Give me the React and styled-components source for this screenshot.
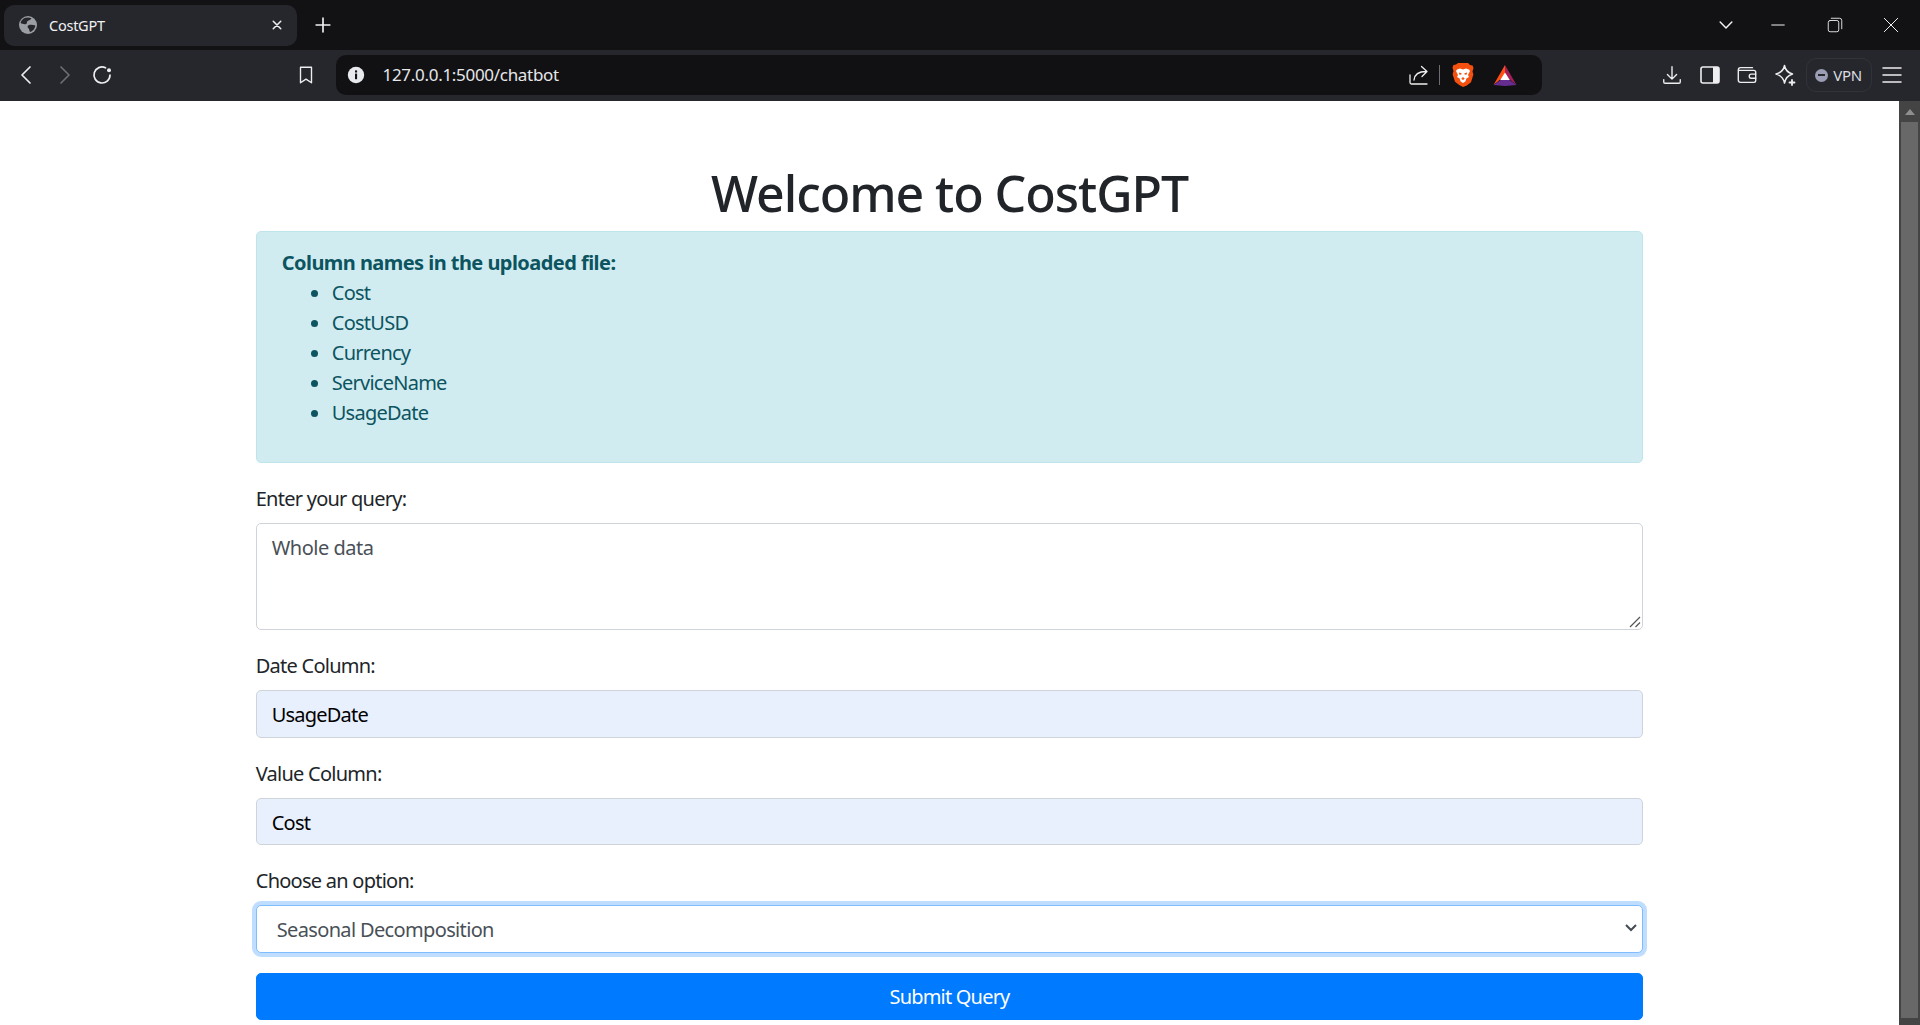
import React from "react";
import styled, { createGlobalStyle } from "styled-components";

const GlobalStyle = createGlobalStyle`
  html, body {
    margin: 0;
    height: 100%;
    overflow: hidden;
    background: #fff;
  }
  * { box-sizing: border-box; }
`;

const uiFont = `"Noto Sans", "Open Sans", Arial, sans-serif`;

const Shell = styled.div`
  display: flex;
  flex-direction: column;
  height: 100vh;
  font-family: ${uiFont};
`;

/* browser chrome */
const TabStrip = styled.div`
  flex: 0 0 50px;
  display: flex;
  align-items: center;
  background: #121214;
  color: #f1f1f3;
`;
const Tab = styled.div`
  flex: 0 0 293px;
  height: 41px;
  margin-left: 4px;
  padding: 0 11px 0 15px;
  display: flex;
  align-items: center;
  gap: 12px;
  background: #26272c;
  border-radius: 10px;
`;
const TabTitle = styled.span`
  flex: 1;
  font-size: 14.5px;
  letter-spacing: -0.25px;
`;
const Slot = styled.div`
  flex: 0 0 ${(p) => p.$w || 37.5}px;
  height: 36px;
  display: flex;
  align-items: center;
  justify-content: center;
`;
const Spacer = styled.div`
  flex: 1;
`;
const Toolbar = styled.div`
  flex: 0 0 51px;
  display: flex;
  align-items: center;
  padding: 0 8px 1px;
  background: #26272c;
  color: #eeeef0;
`;
const NavGroup = styled.div`
  flex: 0 0 279px;
  display: flex;
`;
const AddressBar = styled.div`
  flex: 0 0 1206px;
  height: 40px;
  margin-left: 11px;
  padding-left: 11px;
  display: flex;
  align-items: center;
  background: #111113;
  border-radius: 10px;
`;
const Url = styled.span`
  flex: 1;
  margin-left: 18px;
  padding-bottom: 2px;
  font-size: 17px;
  letter-spacing: -0.3px;
  color: #e6e7ea;
`;
const AddressEnd = styled.div`
  display: flex;
  align-items: center;
`;
const Divider = styled.div`
  width: 1px;
  height: 20px;
  margin: 0 12px 0 8px;
  background: #6d6e73;
`;
const ToolGroup = styled.div`
  margin-left: auto;
  display: flex;
  align-items: center;
`;
const VpnPill = styled.div`
  flex: 0 0 66px;
  height: 34px;
  margin-left: 2px;
  display: flex;
  align-items: center;
  justify-content: center;
  gap: 5px;
  border: 1px solid #323338;
  border-radius: 10px;
  font-size: 15px;
  letter-spacing: -0.4px;
  color: #dcdde1;
`;
const VpnDot = styled.span`
  position: relative;
  width: 13px;
  height: 13px;
  border-radius: 50%;
  background: #9a9db4;
  &::after {
    content: "";
    position: absolute;
    left: 3px;
    right: 3px;
    top: 5.5px;
    height: 2px;
    background: #26272c;
  }
`;

/* page */
const Body = styled.div`
  flex: 1;
  min-height: 0;
  display: flex;
`;
const Page = styled.main`
  flex: 1;
  min-width: 0;
  overflow: hidden;
  background: #fff;
  color: #212529;
`;
const Container = styled.div`
  width: 1387.5px;
  margin: 0 auto;
  padding-top: 62px;
  font-family: "Noto Sans", "Open Sans", Arial, sans-serif;
  font-size: 20px;
  line-height: 30px;
`;
const Title = styled.h1`
  margin: 0 0 7.5px;
  font-size: 50px;
  line-height: 60px;
  font-weight: 500;
  text-align: center;
  letter-spacing: -1.05px;
`;
const Alert = styled.div`
  padding: 15px 25px;
  margin-bottom: 20px;
  background: #d1ecf1;
  border: 1.25px solid #bee5eb;
  border-radius: 5px;
  color: #0c5460;
`;
const AlertHead = styled.strong`
  display: block;
  padding-top: 1px;
  margin-bottom: -1px;
  font-weight: 700;
  letter-spacing: -0.55px;
`;
const ColumnList = styled.ul`
  margin: 0 0 20px;
  padding-left: 50px;
  list-style: none;
`;
const ColumnItem = styled.li`
  position: relative;
  padding-top: 1px;
  margin-bottom: -1px;
  letter-spacing: -0.75px;
  &::before {
    content: "";
    position: absolute;
    left: -21px;
    top: 13px;
    width: 7px;
    height: 7px;
    border-radius: 50%;
    background: #0c5460;
  }
`;
const Field = styled.div`
  margin-bottom: 20px;
`;
const Label = styled.label`
  display: block;
  padding-top: 1px;
  margin-bottom: 9px;
  letter-spacing: -0.75px;
`;
const GripWrap = styled.div`
  position: relative;
`;
const TextArea = styled.textarea`
  display: block;
  width: 100%;
  height: 107.5px;
  padding: 9.5px 15px 6.5px;
  font: inherit;
  letter-spacing: -0.5px;
  color: #495057;
  background: #fff;
  border: 1.25px solid #ced4da;
  border-radius: 5px;
  outline: none;
  resize: none;
`;
const Grip = styled.svg`
  position: absolute;
  right: 2px;
  bottom: 2px;
  pointer-events: none;
`;
const TextInput = styled.input`
  display: block;
  width: 100%;
  height: 47.5px;
  padding: 8.5px 15px 6.5px;
  font: inherit;
  letter-spacing: -0.8px;
  color: #000;
  background: #e8f0fe;
  border: 1.25px solid #ced4da;
  border-radius: 5px;
  outline: none;
`;
const SelectWrap = styled.div`
  position: relative;
`;
const Select = styled.select`
  display: block;
  width: 100%;
  height: 47.5px;
  padding: 3px 30px 0 20px;
  font: inherit;
  letter-spacing: -0.65px;
  color: #495057;
  background: #fff;
  border: 1.25px solid #80bdff;
  border-radius: 5px;
  outline: none;
  appearance: none;
  box-shadow: 0 0 0 4px rgba(0, 123, 255, 0.25);
`;
const SelectArrow = styled.svg`
  position: absolute;
  right: 6px;
  top: 18px;
  pointer-events: none;
`;
const SubmitButton = styled.button`
  display: block;
  width: 100%;
  height: 47.5px;
  padding: 8.5px 15px 6.5px;
  font: inherit;
  letter-spacing: -0.8px;
  color: #fff;
  background: #007bff;
  border: 1.25px solid #007bff;
  border-radius: 5px;
`;

/* scrollbar */
const ScrollBar = styled.div`
  flex: 0 0 21px;
  display: flex;
  flex-direction: column;
  background: #444;
`;
const ScrollUp = styled.div`
  flex: 0 0 21px;
  display: flex;
  align-items: center;
  justify-content: center;
  &::before {
    content: "";
    border-left: 5.5px solid transparent;
    border-right: 5.5px solid transparent;
    border-bottom: 6px solid #8f8f8f;
  }
`;
const ScrollThumb = styled.div`
  flex: 1;
  margin: 0 2px 7px;
  background: #686868;
`;

const Line = ({ size = 20, sw = 1.5, children, box = 24 }) => (
  <svg width={size} height={size} viewBox={`0 0 ${box} ${box}`} fill="none" stroke="currentColor" strokeWidth={sw} strokeLinecap="round" strokeLinejoin="round">
    {children}
  </svg>
);

const Globe = () => (
  <svg width="18" height="18" viewBox="0 0 18 18">
    <circle cx="9" cy="9" r="9" fill="#9b9ea3" />
    <path d="M5 2.200C7 1.400 10 1.200 12.500 2.200 11.700 4 10 4.200 8.600 5 7.400 5.800 8.600 7.400 7 8 5.200 8.600 3 7.600 1.600 7 2 5 3.400 3.200 5 2.200Z" fill="#26272c" />
    <path d="M9.500 9.200C11.500 8.400 14.400 8.800 16.400 9.600 16 12.400 14.200 15 11.600 16 9.800 15.400 10.800 13.400 9.600 12.400 8.600 11.400 8 10 9.500 9.200Z" fill="#26272c" />
  </svg>
);

const InfoIcon = () => (
  <svg width="18" height="18" viewBox="0 0 18 18">
    <circle cx="9" cy="9" r="8.200" fill="#e8e9ec" />
    <rect x="8" y="7.600" width="2.100" height="5.600" fill="#111113" />
    <rect x="8" y="4.400" width="2.100" height="2.100" fill="#111113" />
  </svg>
);

const BraveIcon = () => (
  <svg width="22" height="26" viewBox="0 0 22 26">
    <path d="M6 1h10l2 2 2.600.4.900 2.600-1 3.600.900 3-2.400 7.600-4.200 3.200L11 25l-3.800-2-4.200-3.200L.6 12.200l.9-3L.5 5.600 1.400 3 4 2.600Z" fill="#f4500f" />
    <path d="M5 7.500 8 6.500l3 1 3-1 3 1 1 1.500-2 4 1 2-2.600 1.500-1 3-2.400 1.500-2.400-1.500-1-3L5 15l1-2-2-4Z" fill="#fff" />
    <path d="M7 10.500l2.600.8-.4 1.500-2-.4ZM15 10.500l-2.600.8.400 1.500 2-.4ZM11 15l-1.800 1.800L11 18l1.800-1.200Z" fill="#f4500f" />
  </svg>
);

const BatIcon = () => (
  <svg width="24" height="21" viewBox="0 0 24 21">
    <path d="M12 0 12 11 6.500 15 .500 20Z" fill="#ff4f12" />
    <path d="M12 0 12 11 17.500 15 23.500 20Z" fill="#a21f58" />
    <path d="M.500 20 7.500 15H16.500L23.500 20 12 21Z" fill="#662d91" />
    <path d="M12 7.500 16.800 15H7.200Z" fill="#fff" />
  </svg>
);

function BrowserChrome() {
  return (
    <>
      <TabStrip>
        <Tab>
          <Globe />
          <TabTitle>CostGPT</TabTitle>
          <Line size={18} sw={2}>
            <path d="M7 7 17 17M17 7 7 17" />
          </Line>
        </Tab>
        <Slot $w={52}>
          <Line size={22} sw={1.8}>
            <path d="M12 4.500v15M4.500 12h15" />
          </Line>
        </Slot>
        <Spacer />
        <Slot $w={44}>
          <Line size={20} sw={1.8}>
            <path d="M5 8.500 12 15.500 19 8.500" />
          </Line>
        </Slot>
        <Slot $w={60}>
          <Line size={20} sw={1.2}>
            <path d="M4.500 12h15" />
          </Line>
        </Slot>
        <Slot $w={55}>
          <Line size={18} sw={1.2}>
            <rect x="3" y="6" width="14" height="15" rx="2.500" />
            <path d="M7 3h11a3 3 0 0 1 3 3v11" />
          </Line>
        </Slot>
        <Slot $w={57.5}>
          <Line size={20} sw={1.2}>
            <path d="M4 4 20 20M20 4 4 20" />
          </Line>
        </Slot>
      </TabStrip>
      <Toolbar>
        <NavGroup>
          <Slot>
            <Line size={24} sw={1.7}>
              <path d="M15 4 7 12l8 8" />
            </Line>
          </Slot>
          <Slot>
            <Line size={24} sw={1.7}>
              <g stroke="#6d6e72">
                <path d="M9 4l8 8-8 8" />
              </g>
            </Line>
          </Slot>
          <Slot>
            <Line size={24} sw={1.7}>
              <path d="M20 12A8 8 0 1 1 15.500 4.800" />
              <circle cx="19" cy="7.200" r="2" fill="currentColor" stroke="none" />
            </Line>
          </Slot>
        </NavGroup>
        <Slot>
          <Line size={22} sw={1.5}>
            <path d="M6 3.500h12v17l-6-4-6 4Z" />
          </Line>
        </Slot>
        <AddressBar>
          <InfoIcon />
          <Url>127.0.0.1:5000/chatbot</Url>
          <AddressEnd>
            <Line size={24} sw={1.3}>
              <path d="M3 12v7.500A1.500 1.500 0 0 0 4.500 21H20" />
              <path d="M7 17c.5-5 4-8.500 12-8.500M14.500 3.500 20 8.500l-5 5" />
            </Line>
            <Divider />
            <BraveIcon />
            <Slot $w={62}>
              <BatIcon />
            </Slot>
          </AddressEnd>
          <Slot $w={6} />
        </AddressBar>
        <ToolGroup>
          <Slot>
            <Line size={22} sw={1.5}>
              <path d="M12 3v13M7 11.500l5 5 5-5M3 17v2.500a1.500 1.500 0 0 0 1.500 1.500h15a1.500 1.500 0 0 0 1.500-1.500V17" />
            </Line>
          </Slot>
          <Slot>
            <svg width="20" height="18" viewBox="0 0 20 18">
              <rect x="1" y="1" width="18" height="16" rx="2" fill="none" stroke="#eeeef0" strokeWidth="1.600" />
              <rect x="13" y="1" width="6" height="16" fill="#eeeef0" />
            </svg>
          </Slot>
          <Slot>
            <Line size={22} sw={1.5}>
              <path d="M18 4H5a2.500 2.500 0 0 0-2.500 2.500v11A2.500 2.500 0 0 0 5 20h14.500a2 2 0 0 0 2-2V9a2 2 0 0 0-2-2H3" />
              <path d="M21.500 11h-5a2 2 0 0 0-2 2v.5a2 2 0 0 0 2 2h5" />
            </Line>
          </Slot>
          <Slot>
            <Line size={24} sw={1.5}>
              <path d="M11.500 2.500c.8 4.500 2.800 7 8 8.500-5 1.500-7 4-8 9-1-5-3-7.500-8.500-9 5.500-1.500 7.700-4 8.500-8.500Z" />
              <path d="M19 17v5M16.500 19.500h5" strokeWidth="1.800" />
            </Line>
          </Slot>
          <VpnPill>
            <VpnDot />
            VPN
          </VpnPill>
          <Slot $w={40.5}>
            <Line size={24} sw={1.5}>
              <path d="M3 5h18M3 12h18M3 19h18" />
            </Line>
          </Slot>
        </ToolGroup>
      </Toolbar>
    </>
  );
}

const columns = ["Cost", "CostUSD", "Currency", "ServiceName", "UsageDate"];

export default function App() {
  return (
    <Shell>
      <GlobalStyle />
      <BrowserChrome />
      <Body>
        <Page>
          <Container>
            <Title>Welcome to CostGPT</Title>
            <Alert>
              <AlertHead>Column names in the uploaded file:</AlertHead>
              <ColumnList>
                {columns.map((c) => (
                  <ColumnItem key={c}>{c}</ColumnItem>
                ))}
              </ColumnList>
            </Alert>
            <form>
              <Field>
                <Label htmlFor="query">Enter your query:</Label>
                <GripWrap>
                  <TextArea id="query" rows={3} defaultValue="Whole data" />
                  <Grip width="12" height="12" viewBox="0 0 12 12" stroke="#555" strokeWidth="1.200">
                    <path d="M1 11 11 1M6.500 11 11 6.500" />
                  </Grip>
                </GripWrap>
              </Field>
              <Field>
                <Label htmlFor="date">Date Column:</Label>
                <TextInput id="date" defaultValue="UsageDate" />
              </Field>
              <Field>
                <Label htmlFor="value">Value Column:</Label>
                <TextInput id="value" defaultValue="Cost" />
              </Field>
              <Field>
                <Label htmlFor="option">Choose an option:</Label>
                <SelectWrap>
                  <Select id="option" defaultValue="Seasonal Decomposition">
                    <option>Seasonal Decomposition</option>
                  </Select>
                  <SelectArrow width="12" height="10" viewBox="0 0 12 10" fill="none" stroke="#444b52" strokeWidth="2">
                    <path d="M1 2l5 5 5-5" />
                  </SelectArrow>
                </SelectWrap>
              </Field>
              <SubmitButton type="button">Submit Query</SubmitButton>
            </form>
          </Container>
        </Page>
        <ScrollBar>
          <ScrollUp />
          <ScrollThumb />
        </ScrollBar>
      </Body>
    </Shell>
  );
}
